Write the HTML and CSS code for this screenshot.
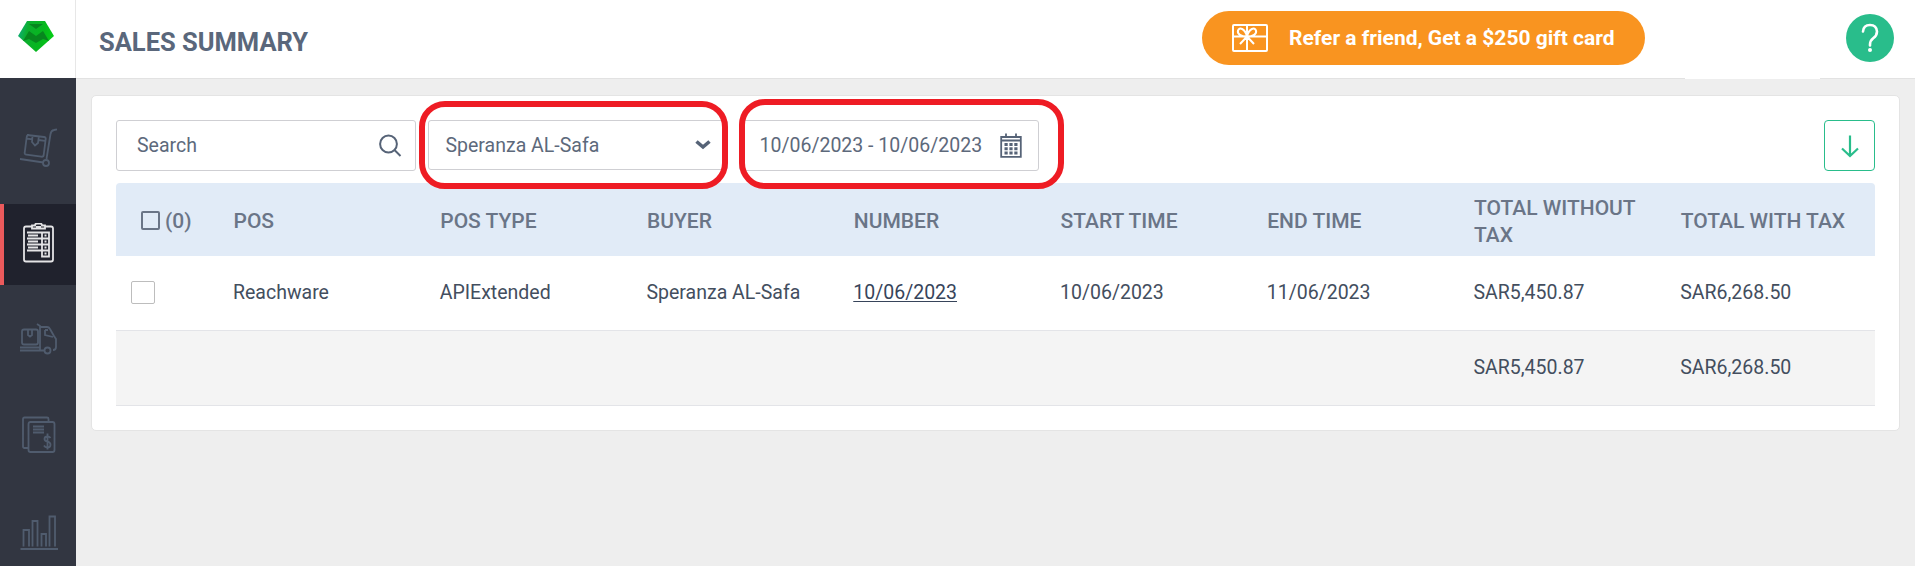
FILE: index.html
```
<!DOCTYPE html>
<html lang="en">
<head>
    <meta charset="utf-8">
    <title>Sales Summary</title>
    <link rel="stylesheet" href="styles.css">
</head>
<body>
    <aside class="sidebar">
        <a href="#" class="logo">
            <svg width="38" height="34" viewBox="0 0 38 34">
                <defs>
                    <linearGradient id="gem" x1="0" y1="0.3" x2="1" y2="0.5">
                        <stop offset="0" stop-color="#0fae7c"/>
                        <stop offset="0.25" stop-color="#0cae2e"/>
                        <stop offset="0.7" stop-color="#06b81c"/>
                        <stop offset="1" stop-color="#06cf16"/>
                    </linearGradient>
                </defs>
                <path d="M10 1h18l9 15-18 16L1 16z" fill="url(#gem)"/>
                <path d="M12 4h14l-7 5zM12 11l7 5 7-5 6 10-6-2-7 4-7-4-6 2z" fill="#07861e"/>
            </svg>
        </a>
        <nav class="menu">
            <a href="#" class="menu-item">
                <svg class="menu-icon" width="40" height="40" viewBox="0 -1 40 40">
                    <path d="M9 7l17 2q2 .3 1.700 2l-2 16q-.3 2-2.300 1.700l-15-2q-2-.3-1.700-2.200l2-15.500q.3-2 2.300-2zM8 10.500l6.500.8M20.500 12l6.500.8M14.500 8l-.5 6 3 3.500 3-2.500.8-6M2 31l23.500 3.500M28.500 31l4-25q.6-3.500 3.500-4l3-.7"/>
                    <circle cx="28" cy="35" r="3"/>
                </svg>
            </a>
            <a href="#" class="menu-item active">
                <svg class="menu-icon" width="40" height="40" viewBox="0 0 40 40">
                    <path d="M14 3.500H8q-2 0-2 2v31q0 2 2 2h25q2 0 2-2v-31q0-2-2-2h-6M14 5.500V2.500h3q0-2 2-2h3q2 0 2 2h3v3zM18 4h5M9 9.500h22v24h-7v-24M9 15.500h22M9 21.500h22M9 27.500h22M10 12.500h10M10 18.500h10M10 24.500h10M26.500 12.500h2M26.500 18.500h2M26.500 24.500h2M26.500 30.500h2"/>
                </svg>
            </a>
            <a href="#" class="menu-item">
                <svg class="menu-icon" width="40" height="40" viewBox="0 0 40 40">
                    <path d="M6 10.500h12q2 0 2 2v11q0 2-2 2H6q-2 0-2-2v-11q0-2 2-2zM10 11v5l2 1.500 2-1.500v-5M2 28.500h20M2 31.500h24M19 5l3 2v24M22 8h7q2 0 3 2l4 7 2 3v8q0 3-3 3M27 11v5l8 2M27 11h3"/>
                    <circle cx="29.500" cy="31.500" r="3"/>
                </svg>
            </a>
            <a href="#" class="menu-item">
                <svg class="menu-icon" width="40" height="40" viewBox="0 0 40 40">
                    <path d="M10 33H6.500q-1.500 0-1.500-1.500V4q0-1.500 1.500-1.500H29q1.500 0 1.500 1.500v3M12.500 7h22q2 0 2 2v26q0 2-2 2h-22q-2 0-2-2V9q0-2 2-2zM15 11.500h11M15 14.500h11M15 17.500h11M32.500 23q-1-1.500-3-1.500-3 0-3 2.500 0 2 3 2.700t3 3q0 2.800-3 2.800-2.500 0-3.500-2M29.500 18.500v16"/>
                </svg>
            </a>
            <a href="#" class="menu-item">
                <svg class="menu-icon" width="40" height="40" viewBox="0 -0.500 40 40">
                    <path d="M2.500 37.500H40M5.500 35V18.500H11V35M14.500 35V9.500H19.500V35M23.500 35V22.500H28V35M31.500 35V5H37V35"/>
                </svg>
            </a>
        </nav>
    </aside>

    <div class="page">
        <header class="topbar">
            <h1>SALES SUMMARY</h1>
            <a href="#" class="refer">
                <svg width="36" height="28" viewBox="0 0 36 28">
                    <rect x="1" y="1" width="34" height="26" rx="1"/>
                    <path d="M15 1v26M1 12.500h34M15 12.500C9 12.500 5 10 6 6.500S13 4 15 12.500C17 4 23 3 24 6.500S21 12.500 15 12.500L8 20M15 12.500l7 7.500"/>
                </svg>
                <span>Refer a friend, Get a $250 gift card</span>
            </a>
            <a href="#" class="help">
                <svg width="48" height="48" viewBox="0 0 48 48">
                    <path d="M17 17.500q.5-6.500 7-6.500t7 6.500q0 4-3.800 6.800-3.200 2.500-3.200 6.200v1"/>
                    <circle cx="24" cy="36" r="2"/>
                </svg>
            </a>
            <span class="tab"></span>
        </header>

        <main class="card">
            <div class="filters">
                <div class="field search">
                    <span>Search</span>
                    <svg width="24" height="24" viewBox="0 0 24 24">
                        <circle cx="10.500" cy="10" r="8.400"/>
                        <path d="M16.500 16l6 6"/>
                    </svg>
                </div>
                <div class="field select">
                    <span>Speranza AL-Safa</span>
                    <svg width="16" height="12" viewBox="0 0 16 12">
                        <path d="M1.500 2.500l6.500 5.500 6.500-5.500"/>
                    </svg>
                    <i class="mark"></i>
                </div>
                <div class="field dates">
                    <span>10/06/2023 - 10/06/2023</span>
                    <svg width="22" height="25" viewBox="0 0 22 25">
                        <path d="M1.200 4h19.600v19.800H1.200zM1 7.500h20M6 .5V5M16 .5V5" stroke-width="1.800"/>
                        <path d="M4.500 11.500h13M4.500 15.700h13M4.500 20h13" stroke-width="3" stroke-dasharray="3.200 1.700"/>
                    </svg>
                    <i class="mark"></i>
                </div>
                <button class="download">
                    <svg width="20" height="24" viewBox="0 0 20 24">
                        <path d="M10 1.500v20M2 14.500l8 7.500 8-7.500"/>
                    </svg>
                </button>
            </div>

            <table class="sales">
                <thead>
                    <tr>
                        <th class="check"><span class="box-head"></span>(0)</th>
                        <th>POS</th>
                        <th>POS TYPE</th>
                        <th>BUYER</th>
                        <th>NUMBER</th>
                        <th>START TIME</th>
                        <th>END TIME</th>
                        <th>TOTAL WITHOUT TAX</th>
                        <th>TOTAL WITH TAX</th>
                    </tr>
                </thead>
                <tbody>
                    <tr>
                        <td class="check"><span class="box"></span></td>
                        <td>Reachware</td>
                        <td>APIExtended</td>
                        <td>Speranza AL-Safa</td>
                        <td><a href="#">10/06/2023</a></td>
                        <td>10/06/2023</td>
                        <td>11/06/2023</td>
                        <td>SAR5,450.87</td>
                        <td>SAR6,268.50</td>
                    </tr>
                    <tr class="total">
                        <td colspan="7"></td>
                        <td>SAR5,450.87</td>
                        <td>SAR6,268.50</td>
                    </tr>
                </tbody>
            </table>
        </main>
    </div>
</body>
</html>
```
FILE: styles.css
```
* {
    box-sizing: border-box;
}

body {
    margin: 0;
    height: 566px;
    display: flex;
    overflow: hidden;
    background: #eee;
    color: #434e5e;
    font-family: Roboto, "Liberation Sans", sans-serif;
    font-size: 19.5px;
}

svg {
    display: block;
    flex: none;
    fill: none;
}

/* sidebar */
.sidebar {
    width: 76px;
    flex: none;
    background: #323641;
}

.logo {
    display: flex;
    height: 78px;
    padding: 20px 0 0 17px;
    background: #fff;
    border-right: 1px solid #e7e7e7;
}

.menu {
    display: flex;
    flex-direction: column;
    gap: 15px;
    padding-top: 30px;
}

.menu-item {
    display: flex;
    align-items: center;
    height: 81px;
    padding: 0 0 3px 18px;
}

.menu-icon {
    stroke: #505c6e;
    stroke-width: 1.8;
}

.active {
    background: #20222d;
    border-left: 4px solid #eb5a5c;
    padding-left: 14px;
}

.active .menu-icon {
    stroke: #e4e4e6;
}

/* top bar */
.page {
    flex: 1;
}

.topbar {
    position: relative;
    display: flex;
    align-items: center;
    height: 79px;
    padding: 0 21px 3px 23px;
    background: #fff;
    border-bottom: 1px solid #e2e2e2;
}

h1 {
    margin: 8px 0 0;
    font-size: 25.5px;
    font-weight: 700;
    color: #5a677b;
}

.refer {
    display: flex;
    align-items: center;
    gap: 21px;
    width: 443px;
    height: 54px;
    margin-left: auto;
    padding-left: 30px;
    border-radius: 27px;
    background: #f99420;
    color: #fff;
    font-size: 21px;
    font-weight: 700;
    text-decoration: none;
    white-space: nowrap;
}

.refer svg {
    stroke: #fff;
    stroke-width: 2;
}

.help {
    width: 48px;
    height: 48px;
    margin-left: 201px;
    border-radius: 50%;
    background: #29bd8b;
}

.help path {
    stroke: #fff;
    stroke-width: 2.6;
    stroke-linecap: round;
}

.help circle {
    fill: #fff;
}

.tab {
    position: absolute;
    right: 95px;
    bottom: -1px;
    width: 135px;
    height: 2px;
    background: #fff;
}

/* card */
.card {
    margin: 16px 15px 0;
    padding: 24px;
    background: #fff;
    border: 1px solid #e4e4e4;
    border-radius: 5px;
}

.filters {
    display: flex;
    gap: 12px;
    height: 63px;
}

.field {
    position: relative;
    display: flex;
    align-items: center;
    justify-content: space-between;
    width: 300px;
    height: 51px;
    border: 1px solid #cfcfd3;
    border-radius: 3px;
    color: #5d697b;
}

.field svg {
    stroke: #566377;
    stroke-width: 2;
}

.search {
    padding: 0 13px 0 20px;
}

.select {
    height: 50px;
    padding: 0 16px 0 16.5px;
}

.select svg {
    stroke-width: 3.6;
}

.dates {
    margin-left: -1px;
    padding: 0 16px 0 19.5px;
}

.mark {
    position: absolute;
    border: 6px solid #ee1c24;
    border-radius: 26px;
}

.select .mark {
    left: -10px;
    top: -20px;
    width: 309px;
    height: 88px;
}

.dates .mark {
    left: -1px;
    top: -22px;
    width: 325px;
    height: 90px;
}

.download {
    display: flex;
    align-items: center;
    justify-content: center;
    width: 51px;
    height: 51px;
    margin-left: auto;
    padding: 0;
    background: #fff;
    border: 1px solid #29bd8b;
    border-radius: 4px;
}

.download svg {
    stroke: #29bd8b;
    stroke-width: 2.2;
}

/* table */
.sales {
    width: 100%;
    table-layout: fixed;
    border-collapse: separate;
    border-spacing: 0;
}

th, td {
    padding: 0 12px;
    text-align: left;
    vertical-align: middle;
}

th {
    height: 73px;
    padding: 4px 11px 0 12.5px;
    background: #e1ebf7;
    color: #6a7587;
    font-size: 21px;
    font-weight: 500;
    line-height: 27px;
}

th:first-child {
    border-radius: 4px 0 0 0;
}

th:last-child {
    border-radius: 0 4px 0 0;
}

td {
    height: 75px;
    padding-bottom: 2px;
    border-bottom: 1px solid #e3e4e8;
}

td a {
    color: #37445a;
    text-underline-offset: 2px;
    text-decoration-thickness: 1px;
}

.check {
    width: 105px;
}

th.check {
    padding-left: 25px;
    padding-right: 0;
}

td.check {
    padding-left: 15px;
}

.box-head {
    display: inline-block;
    width: 19px;
    height: 19px;
    margin-right: 5px;
    border: 2px solid #6a7587;
    border-radius: 2px;
    vertical-align: -2px;
}

.box {
    display: block;
    width: 24px;
    height: 23px;
    border: 1px solid #bdbdbd;
    border-radius: 2px;
}

.total td {
    background: #f4f4f4;
}
```
